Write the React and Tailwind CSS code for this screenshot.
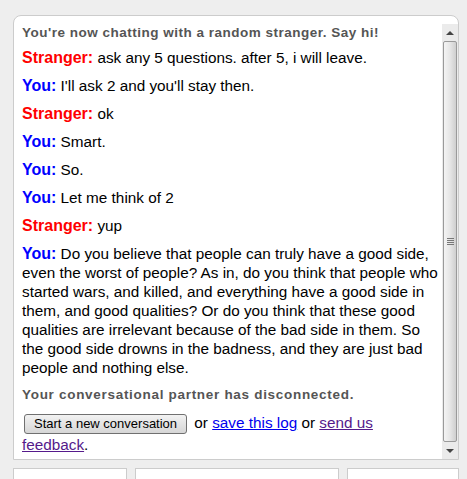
import React from 'react';

const messages = [
  { who: 'Stranger', text: 'ask any 5 questions. after 5, i will leave.' },
  { who: 'You', text: "I'll ask 2 and you'll stay then." },
  { who: 'Stranger', text: 'ok' },
  { who: 'You', text: 'Smart.' },
  { who: 'You', text: 'So.' },
  { who: 'You', text: 'Let me think of 2' },
  { who: 'Stranger', text: 'yup' },
  {
    who: 'You',
    text: 'Do you believe that people can truly have a good side, even the worst of people? As in, do you think that people who started wars, and killed, and everything have a good side in them, and good qualities? Or do you think that these good qualities are irrelevant because of the bad side in them. So the good side drowns in the badness, and they are just bad people and nothing else.',
  },
];

const ScrollBar = () => (
  <div className="mt-[8px] flex w-[16px] flex-col bg-[#ebebeb]">
    <div className="flex h-[17px] items-center justify-center">
      <div className="h-0 w-0 border-x-[4px] border-b-[4px] border-x-transparent border-b-[#444]" />
    </div>
    <div className="mx-[1px] flex flex-1 items-center justify-center rounded-[2px] border border-[#9a9a9a] bg-gradient-to-r from-[#f4f4f4] via-[#e6e6e6] to-[#cfcfcf]">
      <div className="flex flex-col gap-[1px]">
        <div className="h-[1px] w-[7px] bg-[#777]" />
        <div className="h-[1px] w-[7px] bg-[#777]" />
        <div className="h-[1px] w-[7px] bg-[#777]" />
        <div className="h-[1px] w-[7px] bg-[#777]" />
      </div>
    </div>
    <div className="flex h-[17px] items-center justify-center">
      <div className="h-0 w-0 border-x-[4px] border-t-[4px] border-x-transparent border-t-[#444]" />
    </div>
  </div>
);

const App = () => {
  return (
    <div
      className="h-[479px] overflow-hidden bg-[#eeeeee] pl-[13px] pr-[8px] pt-[15px]"
      style={{ fontFamily: '"Liberation Sans", Arial, sans-serif' }}
    >
      <div className="flex h-[445px] rounded-t-[8px] border border-b border-[#cccccc] bg-white">
        <div className="flex-1 overflow-hidden pl-[8px] pr-[1px] pt-[9px] text-[15.3px] text-black">
          <p className="mb-[8px] text-[13.5px] font-bold leading-[15px] tracking-[0.5px] text-[#555555]">
            You're now chatting with a random stranger. Say hi!
          </p>
          {messages.map((m, i) => (
            <p key={i} className="mb-[9px] leading-[19px]">
              <strong className={'text-[16px] ' + (m.who === 'You' ? 'text-[#0000ff]' : 'text-[#ff0000]')}>
                {m.who}:
              </strong>{' '}
              {m.text}
            </p>
          ))}
          <p className="mb-[10px] mt-[10px] text-[13.5px] font-bold leading-[15px] tracking-[0.7px] text-[#555555]">
            Your conversational partner has disconnected.
          </p>
          <p className="leading-[22px]">
            <button className="ml-[2px] mr-[3px] h-[20px] rounded-[3px] border border-[#707070] bg-gradient-to-b from-[#f2f2f2] to-[#d6d6d6] px-[9px] align-middle text-[13px] leading-[16px]">
              Start a new conversation
            </button>{' '}
            or{' '}
            <a href="#" className="text-[#0000ee] underline">
              save this log
            </a>{' '}
            or{' '}
            <a href="#" className="text-[#551a8b] underline">
              send us feedback
            </a>
            .
          </p>
        </div>
        <ScrollBar />
      </div>
      <div className="mt-[8px] flex gap-[8px]">
        <div className="h-[40px] w-[114px] border border-[#cccccc] bg-white" />
        <div className="h-[40px] w-[204px] border border-[#cccccc] bg-white" />
        <div className="h-[40px] w-[112px] border border-[#cccccc] bg-white" />
      </div>
    </div>
  );
};

export default App;
